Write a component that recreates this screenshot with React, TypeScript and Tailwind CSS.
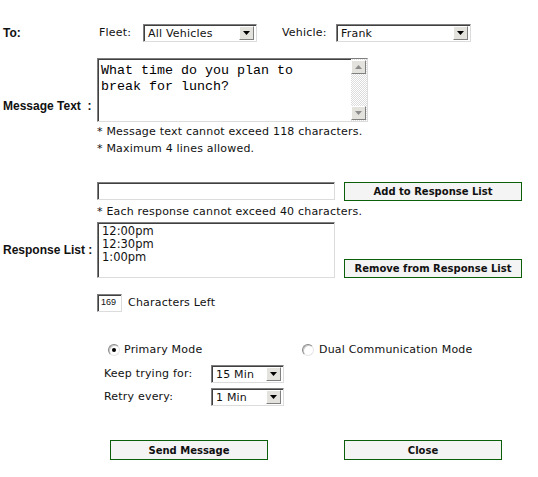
import type { ReactNode } from "react";

const sunken =
  "border border-t-[#7f7f7f] border-l-[#7f7f7f] border-r-[#dcdcdc] border-b-[#dcdcdc] shadow-[inset_1px_1px_0_#404040] bg-white";

function Arrow({ up = false, color = "#000" }: { up?: boolean; color?: string }) {
  return (
    <svg width="7" height="4" viewBox="0 0 7 4">
      <path d={up ? "M0 4 L3.5 0 L7 4 Z" : "M0 0 L7 0 L3.5 4 Z"} fill={color} />
    </svg>
  );
}

function ArrowButton({ up = false, color = "#000" }: { up?: boolean; color?: string }) {
  return (
    <div className="flex h-[14px] w-[15px] items-center justify-center border border-t-white border-l-white border-r-[#808080] border-b-[#808080] bg-[#e4e2dc]">
      <Arrow up={up} color={color} />
    </div>
  );
}

function Select({ value, width }: { value: string; width: string }) {
  return (
    <div className={`${sunken} ${width} flex h-[18px] items-center justify-between pl-[4px] pr-[2px]`}>
      <span className="leading-none">{value}</span>
      <ArrowButton />
    </div>
  );
}

function GreenButton({ children, width }: { children: ReactNode; width: string }) {
  return (
    <div
      className={`${width} flex h-[19px] items-center justify-center border border-[#0b5f0b] bg-[#f4f4f4] font-['DejaVu_Sans',sans-serif] text-[10px] font-bold tracking-normal`}
    >
      {children}
    </div>
  );
}

function Radio({ checked }: { checked: boolean }) {
  return (
    <div className="flex h-[12px] w-[12px] items-center justify-center rounded-full border border-t-[#8a8a8a] border-l-[#8a8a8a] border-r-[#e6e6e6] border-b-[#e6e6e6] bg-white shadow-[inset_1px_1px_0_#c8c8c8]">
      {checked && <div className="h-[4px] w-[4px] rounded-full bg-black" />}
    </div>
  );
}

const label = "font-['Liberation_Sans',Arial,sans-serif] text-[12px] font-bold whitespace-pre tracking-normal";

export default function App() {
  return (
    <div className="h-[477px] w-[538px] bg-white font-['DejaVu_Sans',Verdana,sans-serif] text-[11px] tracking-[0.2px] text-[#111]">
      <div className="flex pt-[24px]">
        <div className="flex h-[18px] items-center">
          <span className={`${label} w-[99px] pl-[3px]`}>To:</span>
          <span className="w-[44px]">Fleet:</span>
          <Select value="All Vehicles" width="w-[114px]" />
          <span className="ml-[25px] w-[54px]">Vehicle:</span>
          <Select value="Frank" width="w-[135px]" />
        </div>
      </div>

      <div className="mt-[16px] flex">
        <div className={`${label} w-[97px] self-center pb-[3px] pl-[3px]`}>Message Text  :</div>
        <div>
          <div className={`${sunken} flex h-[64px] w-[271px]`}>
            <div className="flex-1 pl-[3px] pt-[4px] font-['Liberation_Mono','Courier_New',monospace] text-[13.33px] leading-[16px] tracking-normal text-black">
              What time do you plan to
              <br />
              break for lunch?
            </div>
            <div className="flex w-[16px] flex-col justify-between bg-[#efefef] bg-[repeating-conic-gradient(#dcdcdc_0%_25%,#ffffff_0%_50%)] bg-[length:2px_2px] pt-[1px] pb-[1px]">
              <ArrowButton up color="#8c8c8c" />
              <ArrowButton color="#8c8c8c" />
            </div>
          </div>
          <div className="mt-[1px] leading-[17px]">* Message text cannot exceed 118 characters.</div>
          <div className="leading-[17px]">* Maximum 4 lines allowed.</div>
        </div>
      </div>

      <div className="ml-[97px] mt-[25px] flex items-start">
        <div className={`${sunken} h-[18px] w-[238px]`} />
        <div className="ml-[9px]">
          <GreenButton width="w-[178px]">Add to Response List</GreenButton>
        </div>
      </div>
      <div className="ml-[97px] mt-[2px] leading-[17px]">* Each response cannot exceed 40 characters.</div>

      <div className="mt-[2px] flex items-end">
        <div className={`${label} w-[97px] self-center pl-[3px]`}>Response List :</div>
        <div className={`${sunken} h-[56px] w-[238px] pl-[4px] pt-[2px] text-[11.5px] leading-[13px] tracking-normal`}>
          <div>12:00pm</div>
          <div>12:30pm</div>
          <div>1:00pm</div>
        </div>
        <div className="ml-[9px]">
          <GreenButton width="w-[178px]">Remove from Response List</GreenButton>
        </div>
      </div>

      <div className="ml-[97px] mt-[16px] flex items-center">
        <div className={`${sunken} flex h-[18px] w-[25px] items-center pl-[3px] font-['Liberation_Sans',Arial,sans-serif] text-[9px] tracking-normal`}>
          169
        </div>
        <span className="ml-[6px]">Characters Left</span>
      </div>

      <div className="ml-[108px] mt-[31px] flex h-[14px] items-center">
        <div className="flex w-[194px] items-center">
          <Radio checked />
          <span className="ml-[4px]">Primary Mode</span>
        </div>
        <Radio checked={false} />
        <span className="ml-[5px]">Dual Communication Mode</span>
      </div>

      <div className="ml-[104px] mt-[8px] flex h-[18px] items-center">
        <span className="w-[107px]">Keep trying for:</span>
        <Select value="15 Min" width="w-[73px]" />
      </div>
      <div className="ml-[104px] mt-[5px] flex h-[18px] items-center">
        <span className="w-[107px]">Retry every:</span>
        <Select value="1 Min" width="w-[73px]" />
      </div>

      <div className="ml-[110px] mt-[34px] flex">
        <GreenButton width="w-[158px] h-[20px]">Send Message</GreenButton>
        <div className="ml-[76px]">
          <GreenButton width="w-[158px] h-[20px]">Close</GreenButton>
        </div>
      </div>
    </div>
  );
}
